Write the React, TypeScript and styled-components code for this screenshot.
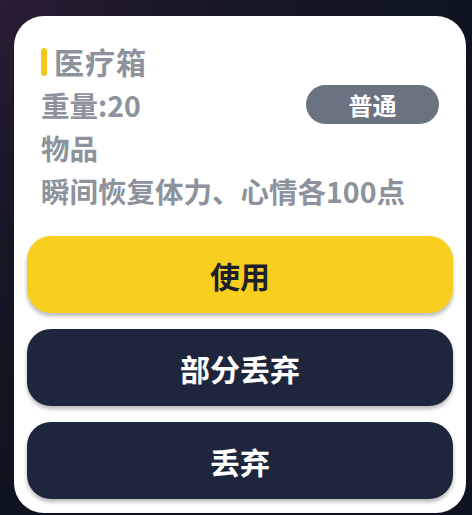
import styled, { createGlobalStyle } from "styled-components";

const GlobalStyle = createGlobalStyle`
    html, body {
        margin: 0;
        padding: 0;
        width: 472px;
        height: 515px;
        overflow: hidden;
    }
    body {
        background: radial-gradient(circle at 0% 0%, #2a1c33 0%, #141624 35%, #0d1420 70%);
        font-family: "Noto Sans CJK SC", "Noto Sans", sans-serif;
    }
`;

const Screen = styled.div`
    padding: 16px 6px 0 14px;
`;

const Card = styled.div`
    background: #ffffff;
    border-radius: 30px;
    height: 497px;
    box-sizing: border-box;
    padding: 30px 13px 0;
    display: flex;
    flex-direction: column;
`;

const Info = styled.div`
    padding: 0 14px;
    color: #8c939c;
    font-size: 28.5px;
    font-weight: 700;
    line-height: 43px;
`;

const Title = styled.div`
    display: flex;
    align-items: center;
    gap: 7px;
    font-size: 30px;
    letter-spacing: 1px;
    margin-top: -6px;
`;

const Accent = styled.span`
    width: 6px;
    height: 28px;
    border-radius: 3px;
    background: #f7c51c;
`;

const WeightRow = styled.div`
    display: flex;
    justify-content: space-between;
    align-items: center;
`;

const Badge = styled.span`
    width: 133px;
    height: 39px;
    border-radius: 20px;
    background: #6b7280;
    color: #ffffff;
    font-size: 24px;
    font-weight: 700;
    display: flex;
    align-items: center;
    justify-content: center;
`;

const Actions = styled.div`
    display: flex;
    flex-direction: column;
    gap: 16px;
    margin-top: 24px;
`;

const ActionButton = styled.button<{ $primary?: boolean }>`
    height: 77px;
    border: none;
    border-radius: 24px;
    background: ${({ $primary }) => ($primary ? "#f8cf1e" : "#1e263d")};
    color: ${({ $primary }) => ($primary ? "#1d1f2a" : "#ffffff")};
    font-family: inherit;
    font-size: 30px;
    font-weight: 700;
    box-shadow: 0 3px 4px rgba(0, 0, 0, 0.28);
    cursor: pointer;
`;

export default function App() {
    return (
        <>
            <GlobalStyle />
            <Screen>
                <Card>
                    <Info>
                        <Title>
                            <Accent />
                            医疗箱
                        </Title>
                        <WeightRow>
                            <span>重量:20</span>
                            <Badge>普通</Badge>
                        </WeightRow>
                        <div>物品</div>
                        <div>瞬间恢复体力、心情各100点</div>
                    </Info>
                    <Actions>
                        <ActionButton $primary>使用</ActionButton>
                        <ActionButton>部分丢弃</ActionButton>
                        <ActionButton>丢弃</ActionButton>
                    </Actions>
                </Card>
            </Screen>
        </>
    );
}
